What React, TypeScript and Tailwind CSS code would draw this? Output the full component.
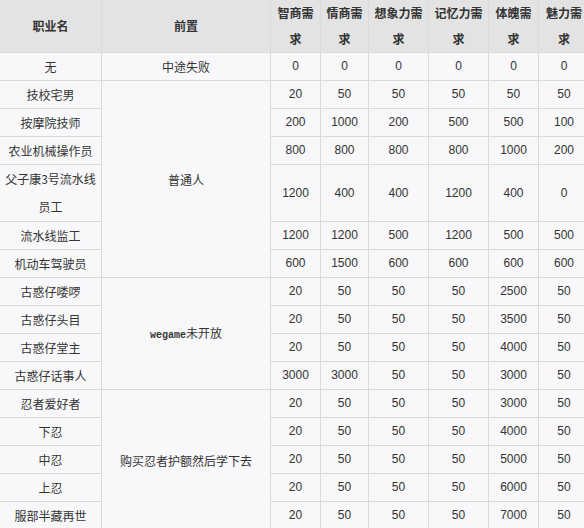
import React from 'react';

type Row = {
  name: string;
  pre?: { text: React.ReactNode; span: number };
  vals: string[];
};

const rows: Row[] = [
  { name: '无', pre: { text: '中途失败', span: 1 }, vals: ['0', '0', '0', '0', '0', '0'] },
  { name: '技校宅男', pre: { text: '普通人', span: 6 }, vals: ['20', '50', '50', '50', '50', '50'] },
  { name: '按摩院技师', vals: ['200', '1000', '200', '500', '500', '100'] },
  { name: '农业机械操作员', vals: ['800', '800', '800', '800', '1000', '200'] },
  { name: '父子康3号流水线员工', vals: ['1200', '400', '400', '1200', '400', '0'] },
  { name: '流水线监工', vals: ['1200', '1200', '500', '1200', '500', '500'] },
  { name: '机动车驾驶员', vals: ['600', '1500', '600', '600', '600', '600'] },
  {
    name: '古惑仔喽啰',
    pre: {
      text: (
        <>
          <span className="font-['Liberation_Mono',monospace] text-[10px] font-bold">wegame</span>未开放
        </>
      ),
      span: 4,
    },
    vals: ['20', '50', '50', '50', '2500', '50'],
  },
  { name: '古惑仔头目', vals: ['20', '50', '50', '50', '3500', '50'] },
  { name: '古惑仔堂主', vals: ['20', '50', '50', '50', '4000', '50'] },
  { name: '古惑仔话事人', vals: ['3000', '3000', '50', '50', '3000', '50'] },
  { name: '忍者爱好者', pre: { text: '购买忍者护额然后学下去', span: 6 }, vals: ['20', '50', '50', '50', '3000', '50'] },
  { name: '下忍', vals: ['20', '50', '50', '50', '4000', '50'] },
  { name: '中忍', vals: ['20', '50', '50', '50', '5000', '50'] },
  { name: '上忍', vals: ['20', '50', '50', '50', '6000', '50'] },
  { name: '服部半藏再世', vals: ['20', '50', '50', '50', '7000', '50'] },
  { name: '', vals: ['', '', '', '', '', ''] },
];

const heads = [
  ['智商需', '求'],
  ['情商需', '求'],
  ['想象力需', '求'],
  ['记忆力需', '求'],
  ['体魄需', '求'],
  ['魅力需', '求'],
];

export default function App() {
  const cell = 'border border-[#dadada] text-center align-middle p-0';
  return (
    <div className="w-[584px] h-[528px] overflow-hidden bg-white">
      <table className="table-fixed border-collapse w-[590px] -ml-px -mt-px text-[12px] text-[#333] font-['Noto_Sans_CJK_SC',sans-serif]">
        <colgroup>
          <col className="w-[102px]" />
          <col className="w-[169px]" />
          <col className="w-[50px]" />
          <col className="w-[48px]" />
          <col className="w-[60px]" />
          <col className="w-[60px]" />
          <col className="w-[50px]" />
          <col className="w-[51px]" />
        </colgroup>
        <thead>
          <tr className="bg-[#e3e3e3] font-bold leading-[26px]">
            <th className={cell}>职业名</th>
            <th className={cell}>前置</th>
            {heads.map((h) => (
              <th key={h[0]} className={cell}>
                {h[0]}
                <br />
                {h[1]}
              </th>
            ))}
          </tr>
        </thead>
        <tbody className="bg-[#f8f8fa] leading-[27px]">
          {rows.map((r, i) => (
            <tr key={i}>
              <td className={`${cell} ${r.name.length > 8 ? 'leading-[28px]' : ''}`}>{r.name}</td>
              {r.pre && (
                <td rowSpan={r.pre.span} className={cell}>
                  {r.pre.text}
                </td>
              )}
              {r.vals.map((v, j) => (
                <td key={j} className={`${cell} font-['Liberation_Sans',sans-serif]`}>
                  {v}
                </td>
              ))}
            </tr>
          ))}
        </tbody>
      </table>
    </div>
  );
}
